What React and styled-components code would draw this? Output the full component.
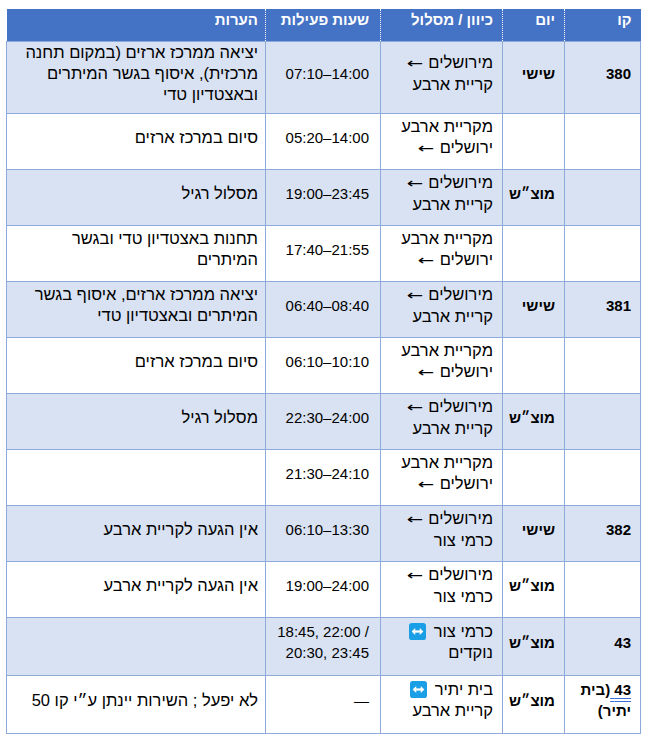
import React from 'react'
import styled, { createGlobalStyle } from 'styled-components'

const GlobalStyle = createGlobalStyle`
  body {
    margin: 0;
    background: #fff;
    font-family: "Liberation Sans", Arial, sans-serif;
  }
`

const ARROW = '←'
const ROUTE_TO_KA = [['מירושלים', ARROW], ['קריית ארבע']]
const ROUTE_TO_JLM = [['מקריית ארבע'], ['ירושלים', ARROW]]
const ROUTE_TO_KZ = [['מירושלים', ARROW], ['כרמי צור']]

const rows = [
  { line: '380', day: 'שישי', route: ROUTE_TO_KA, hours: ['07:10–14:00'], h: 72,
    notes: ['יציאה ממרכז ארזים (במקום תחנה', 'מרכזית), איסוף בגשר המיתרים', 'ובאצטדיון טדי'] },
  { route: ROUTE_TO_JLM, hours: ['05:20–14:00'], notes: ['סיום במרכז ארזים'] },
  { day: 'מוצ״ש', route: ROUTE_TO_KA, hours: ['19:00–23:45'], notes: ['מסלול רגיל'] },
  { route: ROUTE_TO_JLM, hours: ['17:40–21:55'], notes: ['תחנות באצטדיון טדי ובגשר', 'המיתרים'] },
  { line: '381', day: 'שישי', route: ROUTE_TO_KA, hours: ['06:40–08:40'],
    notes: ['יציאה ממרכז ארזים, איסוף בגשר', 'המיתרים ובאצטדיון טדי'] },
  { route: ROUTE_TO_JLM, hours: ['06:10–10:10'], notes: ['סיום במרכז ארזים'] },
  { day: 'מוצ״ש', route: ROUTE_TO_KA, hours: ['22:30–24:00'], notes: ['מסלול רגיל'] },
  { route: ROUTE_TO_JLM, hours: ['21:30–24:10'], notes: [] },
  { line: '382', day: 'שישי', route: ROUTE_TO_KZ, hours: ['06:10–13:30'], notes: ['אין הגעה לקריית ארבע'] },
  { day: 'מוצ״ש', route: ROUTE_TO_KZ, hours: ['19:00–24:00'], notes: ['אין הגעה לקריית ארבע'] },
  { line: '43', day: 'מוצ״ש', route: [['כרמי צור'], ['נוקדים']], both: true, h: 58,
    hours: ['18:45, 22:00 /', '20:30, 23:45'], notes: [] },
  { line: 'yatir', day: 'מוצ״ש', route: [['בית יתיר'], ['קריית ארבע']], both: true, h: 58,
    hours: ['—'], notes: ['לא יפעל ; השירות יינתן ע״י קו 50'] },
]

function BothWays() {
  return (
    <Icon viewBox="0 0 18 18" aria-hidden="true">
      <rect x="0" y="0" width="18" height="18" rx="3" fill="#1a9fe6" />
      <path d="M5.5 9h7" stroke="#fff" strokeWidth="2.4" />
      <path d="M2.8 9 6.6 5.4v7.2zM15.2 9 11.4 5.4v7.2z" fill="#fff" />
    </Icon>
  )
}

export default function App() {
  return (
    <Page>
      <GlobalStyle />
      <Table dir="rtl">
        <colgroup>
          <col style={{ width: 76 }} />
          <col style={{ width: 62 }} />
          <col style={{ width: 122 }} />
          <col style={{ width: 115 }} />
          <col style={{ width: 259 }} />
        </colgroup>
        <thead>
          <tr>
            <HeadCell>קו</HeadCell>
            <HeadCell>יום</HeadCell>
            <HeadCell>כיוון / מסלול</HeadCell>
            <HeadCell $pr={11}>שעות פעילות</HeadCell>
            <HeadCell $pr={7}>הערות</HeadCell>
          </tr>
        </thead>
        <tbody>
          {rows.map((r, i) => (
            <Row key={i} $shaded={i % 2 === 0} $h={r.h || 56}>
              <Cell $bold>
                {r.line === 'yatir' ? (
                  <>
                    <Marked>43 </Marked>(בית יתיר)
                  </>
                ) : r.line}
              </Cell>
              <Cell $bold>{r.day}</Cell>
              <Cell>
                {r.route.map(([word, arrow], j) => (
                  <Line key={j}>
                    {word}
                    {arrow && <Arrow>{arrow}</Arrow>}
                    {r.both && j === 0 && <BothWays />}
                  </Line>
                ))}
              </Cell>
              <Cell $pr={11}>
                {r.hours.map((t, j) => <Ltr key={j}>{t}</Ltr>)}
              </Cell>
              <Cell $pr={7}>
                {r.notes.map((t, j) => <Line key={j}>{t}</Line>)}
              </Cell>
            </Row>
          ))}
        </tbody>
      </Table>
    </Page>
  )
}

const Page = styled.div`
  padding: 9px 0 0 6px;
`

const Table = styled.table`
  border-collapse: collapse;
  table-layout: fixed;
  width: 635px;
  direction: rtl;
  font-size: 15px;
  color: #000;
`

const HeadCell = styled.th`
  height: 32px;
  box-sizing: border-box;
  background: #4472c4;
  color: #fff;
  font-weight: 700;
  text-align: right;
  vertical-align: top;
  line-height: 20px;
  padding: 1px ${p => p.$pr || 9}px 0 4px;
  border-left: 1px dotted #fff;
  &:last-child {
    border-left: none;
  }
`

const Row = styled.tr`
  height: ${p => p.$h}px;
  background: ${p => (p.$shaded ? '#d9e2f3' : '#fff')};
`

const Cell = styled.td`
  border: 1px solid #8eaadb;
  padding: 0 ${p => p.$pr || 9}px 8px 4px;
  vertical-align: middle;
  text-align: right;
  line-height: 21px;
  font-size: ${p => (p.$bold ? 15 : 16.5)}px;
  font-weight: ${p => (p.$bold ? 700 : 400)};
`

const Line = styled.div`
  white-space: nowrap;
`

const Arrow = styled.span`
  display: inline-block;
  font-family: "DejaVu Sans", sans-serif;
  font-size: 14px;
  transform: scaleX(1.4);
  margin: 0 8px 0 3px;
`

const Ltr = styled.div`
  direction: ltr;
  unicode-bidi: isolate;
  text-align: right;
  white-space: nowrap;
  font-size: 15px;
`

const Icon = styled.svg`
  width: 17px;
  height: 17px;
  margin-right: 8px;
  vertical-align: -3px;
`

const Marked = styled.span`
  text-decoration: underline double #3b6fd6;
  text-underline-offset: 3px;
`
